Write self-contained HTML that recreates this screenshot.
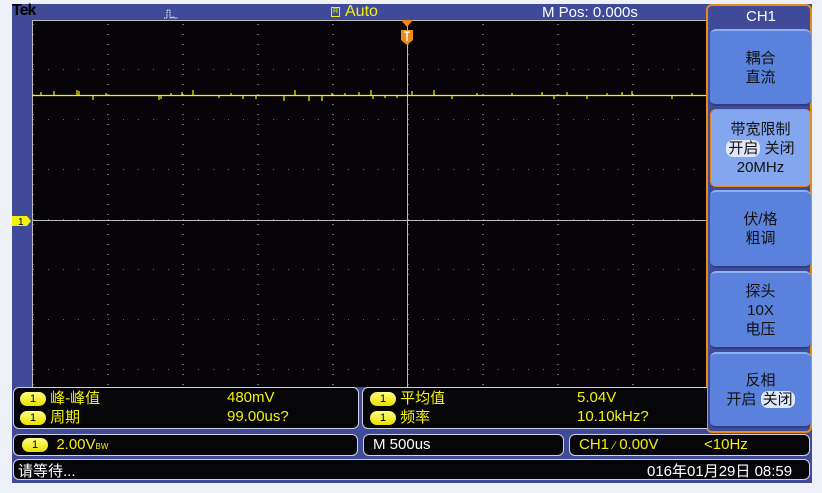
<!DOCTYPE html>
<html><head><meta charset="utf-8"><style>
*{margin:0;padding:0;box-sizing:border-box}
body{width:822px;height:493px;background:#eef2f8;position:relative;overflow:hidden;font-family:"Liberation Sans","Noto Sans CJK SC",sans-serif}
.a{position:absolute}
.frame{left:12px;top:4px;width:800px;height:479px;background:#3f4b98}
.txt{color:#fff;font-size:14px;white-space:nowrap}
.y{color:#f2f20a}
.box{border:1px solid #cfd2e6;border-radius:6px;background:#060508}
.pill{display:inline-block;width:26px;height:14px;border-radius:7px;background:linear-gradient(#ffff80,#e8e000);color:#000;font-size:11px;text-align:center;line-height:14px;vertical-align:middle}
.menu{left:706px;top:4px;width:106px;height:429px;border:2px solid #e88a1c;border-radius:6px;background:#3f4b98}
.btn{position:absolute;left:4px;width:101px;background:#5a82dc;border-radius:6px;border-top:2px solid #8fb0f0;border-bottom:2px solid #2d3e80;color:#111;font-size:15px;text-align:center;line-height:19px;display:flex;flex-direction:column;justify-content:center}
.sel{background:#dfe8fa;border-radius:7px;padding:0 2px}
</style></head><body>
<div class="a frame"></div>
<div class="a" style="left:12px;top:2px;font-weight:bold;font-size:16px;color:#000;letter-spacing:-1px">Tek</div>
<svg class="a" style="left:163px;top:8px" width="16" height="11"><path d="M1 10H4V2H7V10H9V9H11V10H15" stroke="#fff" fill="none" stroke-width="1" stroke-dasharray="1 .6"/></svg>
<div class="a" style="left:331px;top:7px;width:9px;height:10px;border:1px solid #f2f20a;font-size:7px;color:#f2f20a;line-height:8px;text-align:center">R</div>
<div class="a y" style="left:345px;top:3px;font-size:16px">Auto</div>
<div class="a txt" style="left:542px;top:4px;font-size:15px">M Pos: 0.000s</div>
<svg class="a" style="left:32px;top:20px" width="674" height="367">
<defs>
<pattern id="h" x="1" y="0" width="15" height="50" patternUnits="userSpaceOnUse"><rect x="0" y="49.5" width="1" height="1" fill="#ccc"/></pattern>
<pattern id="v" x="0" y="4" width="75" height="10" patternUnits="userSpaceOnUse"><rect x="0.5" y="0" width="1" height="1" fill="#ccc"/></pattern>
</defs>
<rect width="674" height="367" fill="#060408"/>
<rect width="674" height="367" fill="url(#h)"/>
<rect width="674" height="367" fill="url(#v)"/>
<line x1="0" y1="0.5" x2="674" y2="0.5" stroke="#bbb"/>
<line x1="0.5" y1="0" x2="0.5" y2="367" stroke="#bbb"/>
<line x1="0" y1="200.5" x2="674" y2="200.5" stroke="#bbb"/>
<line x1="375.5" y1="0" x2="375.5" y2="367" stroke="#bbb"/>
<line x1="0" y1="75.5" x2="674" y2="75.5" stroke="#f2f20a" stroke-width="1.2"/>
<g stroke="#f2f20a" stroke-width="1.2">
<path d="M9 75V72M22 75V71M45 75V70M47 75V71M61 76V80M74 75V73M127 76V80M129 76V79M139 75V73M150 75V72M161 75V70M187 76V78M199 75V73M211 76V79M224 76V79M252 76V81M277 76V81M290 76V81M263 75V70M300 75V73M313 75V73M327 75V72M339 75V70M341 76V79M353 76V78M365 76V78M380 75V71M402 75V70M420 76V79M445 75V73M480 75V73M510 75V72M522 76V79M535 75V72M555 76V79M575 75V73M590 75V72M600 75V71M640 76V79M660 75V73"/>
</g>
<path d="M369 0H381L375 7Z" fill="#f08a10"/>
<path d="M369 10H381V20L375 25L369 20Z" fill="#f08a10"/>
<path d="M372 12H378M375 12V21" stroke="#fff" stroke-width="1.5"/>
</svg>
<svg class="a" style="left:12px;top:215px" width="20" height="12"><path d="M0 1H15L19 6L15 11H0Z" fill="#f2f20a"/><text x="6" y="10" font-size="10" font-family="Liberation Sans" fill="#000">1</text></svg>
<div class="a menu"></div>
<div class="a txt" style="left:708px;top:8px;width:106px;text-align:center;font-size:15px">CH1</div>
<div class="btn" style="left:710px;top:29px;height:77px">耦合<br>直流</div>
<div class="btn" style="left:710px;top:109px;height:78px;background:#84a6ee;border:1px solid #e88a1c;border-radius:6px">带宽限制<br><span><span class="sel">开启</span> 关闭</span>20MHz</div>
<div class="btn" style="left:710px;top:190px;height:78px">伏/格<br>粗调</div>
<div class="btn" style="left:710px;top:271px;height:78px">探头<br>10X<br>电压</div>
<div class="btn" style="left:710px;top:352px;height:76px">反相<br><span>开启 <span class="sel">关闭</span></span></div>
<div class="a box" style="left:13px;top:387px;width:346px;height:42px"></div>
<div class="a box" style="left:362px;top:387px;width:345px;height:42px;border-right:none;border-radius:6px 0 0 6px"></div>
<div class="a y" style="left:20px;top:389px;font-size:15px;line-height:19px"><span class="pill">1</span> 峰-峰值</div>
<div class="a y" style="left:20px;top:408px;font-size:15px;line-height:19px"><span class="pill">1</span> 周期</div>
<div class="a y" style="left:227px;top:389px;font-size:15px">480mV</div>
<div class="a y" style="left:227px;top:408px;font-size:15px">99.00us?</div>
<div class="a y" style="left:370px;top:389px;font-size:15px;line-height:19px"><span class="pill">1</span> 平均值</div>
<div class="a y" style="left:370px;top:408px;font-size:15px;line-height:19px"><span class="pill">1</span> 频率</div>
<div class="a y" style="left:577px;top:389px;font-size:15px">5.04V</div>
<div class="a y" style="left:577px;top:408px;font-size:15px">10.10kHz?</div>
<div class="a box" style="left:13px;top:434px;width:345px;height:22px"></div>
<div class="a box" style="left:363px;top:434px;width:201px;height:22px"></div>
<div class="a box" style="left:569px;top:434px;width:241px;height:22px"></div>
<div class="a y" style="left:22px;top:436px;font-size:15px"><span class="pill">1</span>&nbsp; 2.00V<span style="font-size:8px">BW</span></div>
<div class="a txt" style="left:373px;top:436px;font-size:15px">M 500us</div>
<div class="a y" style="left:579px;top:436px;font-size:15px">CH1 <span style="font-size:11px">⁄</span> 0.00V</div>
<div class="a y" style="left:704px;top:436px;font-size:15px">&lt;10Hz</div>
<div class="a box" style="left:13px;top:459px;width:797px;height:21px"></div>
<div class="a txt" style="left:18px;top:460px;font-size:15px">请等待...</div>
<div class="a txt" style="left:647px;top:460px;font-size:15px">016年01月29日 08:59</div>
</body></html>
